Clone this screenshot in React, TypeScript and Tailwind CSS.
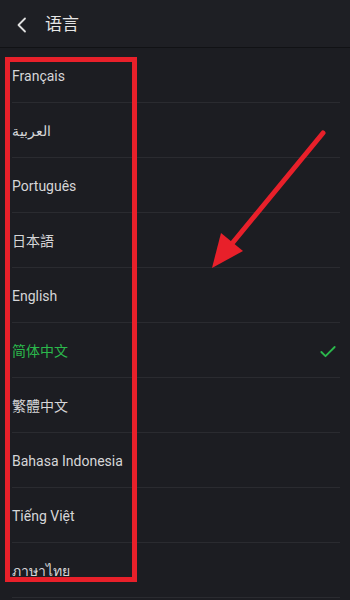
import { Check } from 'lucide-react';

const LANGS = [
  'Français',
  'العربية',
  'Português',
  '日本語',
  'English',
  '简体中文',
  '繁體中文',
  'Bahasa Indonesia',
  'Tiếng Việt',
  'ภาษาไทย',
];

const SELECTED = '简体中文';

export default function App() {
  return (
    <div
      className="relative h-[600px] w-[350px] overflow-hidden bg-[#1c1d22] text-[#d6d6d8]"
      style={{ fontFamily: 'Roboto, "Noto Sans", "Noto Sans CJK SC", sans-serif' }}
    >
      {/* header */}
      <header className="flex h-12 items-center border-b border-[#111215] bg-[#1e1f24] pt-[3px]">
        <svg className="ml-[16px]" width="11" height="16" viewBox="0 0 11 16" fill="none">
          <polyline points="9,1.5 2.5,8 9,14.5" stroke="#e0e0e0" strokeWidth="1.8" strokeLinecap="round" strokeLinejoin="round" />
        </svg>
        <h1 className="ml-[18px] text-[17px] text-[#e6e6e6]">语言</h1>
      </header>

      <ul>
        {LANGS.map((name) => {
          const active = name === SELECTED;
          return (
            <li key={name} className="ml-3 mr-[10px] flex h-[55px] items-center border-b border-[#2a2b30] pt-[3px]">
              <span className={active ? 'text-[14px] text-[#2bb84c]' : 'text-[14px]'}>{name}</span>
              {active && <Check className="ml-auto mr-[2px] h-[20px] w-[20px] text-[#2bb84c]" strokeWidth={2.2} />}
            </li>
          );
        })}
      </ul>

      {/* annotation overlay */}
      <div className="pointer-events-none absolute left-[5px] top-[57px] h-[525px] w-[132px] border-[5px] border-[#e8202a]" />
      <svg className="pointer-events-none absolute left-0 top-0" width="350" height="600">
        <line x1="323" y1="133" x2="230" y2="246" stroke="#e8202a" strokeWidth="5" strokeLinecap="round" />
        <polygon points="212,268 221,233 243,251" fill="#e8202a" />
      </svg>
    </div>
  );
}
